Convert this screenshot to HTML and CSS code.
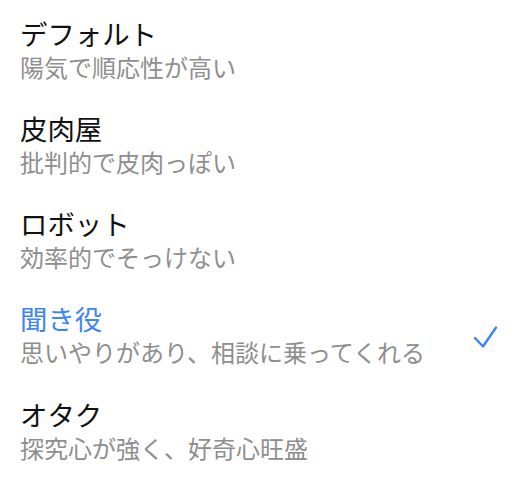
FILE: index.html
```html
<!DOCTYPE html>
<html lang="ja">
<head>
  <meta charset="UTF-8">
  <meta name="viewport" content="width=device-width, initial-scale=1.0">
  <title>性格</title>
  <link rel="stylesheet" href="styles.css">
</head>
<body>
  <ul class="persona-list">
    <li class="persona">
      <div class="persona-text">
        <div class="persona-name">デフォルト</div>
        <div class="persona-desc">陽気で順応性が高い</div>
      </div>
    </li>
    <li class="persona">
      <div class="persona-text">
        <div class="persona-name">皮肉屋</div>
        <div class="persona-desc">批判的で皮肉っぽい</div>
      </div>
    </li>
    <li class="persona">
      <div class="persona-text">
        <div class="persona-name">ロボット</div>
        <div class="persona-desc">効率的でそっけない</div>
      </div>
    </li>
    <li class="persona selected">
      <div class="persona-text">
        <div class="persona-name">聞き役</div>
        <div class="persona-desc">思いやりがあり、相談に乗ってくれる</div>
      </div>
      <svg class="check" width="26" height="24" viewBox="0 0 26 24">
        <polyline points="2,12 10,20.5 23,1.5" fill="none" stroke="currentColor" stroke-width="2.4" stroke-linecap="round" stroke-linejoin="round"/>
      </svg>
    </li>
    <li class="persona">
      <div class="persona-text">
        <div class="persona-name">オタク</div>
        <div class="persona-desc">探究心が強く、好奇心旺盛</div>
      </div>
    </li>
  </ul>
</body>
</html>
```

FILE: styles.css
```css
* {
  margin: 0;
  padding: 0;
  box-sizing: border-box;
}

body {
  font-family: "Noto Sans CJK JP", "Noto Sans", sans-serif;
  background: #fff;
  color: #000;
}

.persona-list {
  list-style: none;
}

.persona {
  display: flex;
  align-items: center;
  justify-content: space-between;
  padding: 15.5px 25px 12.83px 20px;
}

.persona-name {
  font-size: 27.4px;
  line-height: 34px;
  color: #111;
}

.persona-desc {
  font-size: 24px;
  line-height: 33px;
  color: #8e8e8e;
}

.selected .persona-name {
  color: #3d85f4;
}

.check {
  color: #3d85f4;
  margin-top: 6px;
}
```
